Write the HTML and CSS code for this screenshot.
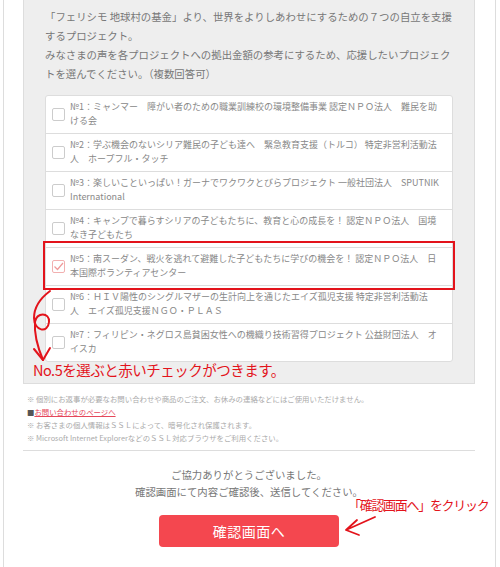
FILE: index.html
```html
<!DOCTYPE html>
<html lang="ja">
<head>
    <meta charset="UTF-8">
    <meta name="viewport" content="width=device-width, initial-scale=1.0">
    <title>アンケート</title>
    <link rel="stylesheet" href="styles.css">
</head>
<body>
<div class="page">

    <!-- Question panel -->
    <div class="panel">
        <p class="lead">「フェリシモ 地球村の基金」より、世界をよりしあわせにするための７つの自立を支援するプロジェクト。<br>みなさまの声を各プロジェクトへの拠出金額の参考にするため、応援したいプロジェクトを選んでください。（複数回答可）</p>

        <ul class="choices">
            <li class="choice"><span class="box"></span><span class="label">№1：ミャンマー　障がい者のための職業訓練校の環境整備事業 認定ＮＰＯ法人　難民を助<br>ける会</span></li>
            <li class="choice"><span class="box"></span><span class="label">№2：学ぶ機会のないシリア難民の子ども達へ　緊急教育支援（トルコ） 特定非営利活動法<br>人　ホープフル・タッチ</span></li>
            <li class="choice"><span class="box"></span><span class="label">№3：楽しいこといっぱい！ガーナでワクワクとびらプロジェクト 一般社団法人　SPUTNIK<br>International</span></li>
            <li class="choice"><span class="box"></span><span class="label">№4：キャンプで暮らすシリアの子どもたちに、教育と心の成長を！ 認定ＮＰＯ法人　国境<br>なき子どもたち</span></li>
            <li class="choice is-checked">
                <span class="box">
                    <svg viewBox="0 0 13 13" width="13" height="13"><path d="M2.5 6.5 L5.5 9.5 L11 3" fill="none" stroke="#ef9a9a" stroke-width="1.2"/></svg>
                </span>
                <span class="label">№5：南スーダン、戦火を逃れて避難した子どもたちに学びの機会を！ 認定ＮＰＯ法人　日<br>本国際ボランティアセンター</span>
            </li>
            <li class="choice"><span class="box"></span><span class="label">№6：ＨＩＶ陽性のシングルマザーの生計向上を通じたエイズ孤児支援 特定非営利活動法<br>人　エイズ孤児支援ＮＧＯ・ＰＬＡＳ</span></li>
            <li class="choice"><span class="box"></span><span class="label">№7：フィリピン・ネグロス島貧困女性への機織り技術習得プロジェクト 公益財団法人　オ<br>イスカ</span></li>
        </ul>
    </div>

    <!-- Notes -->
    <ul class="notes">
        <li>※ 個別にお返事が必要なお問い合わせや商品のご注文、お休みの連絡などにはご使用いただけません。</li>
        <li><span class="square">■</span><a href="#" class="notes-link">お問い合わせのページへ</a></li>
        <li>※ お客さまの個人情報はＳＳＬによって、暗号化され保護されます。</li>
        <li>※ Microsoft Internet ExplorerなどのＳＳＬ対応ブラウザをご利用ください。</li>
    </ul>

    <!-- Submit -->
    <div class="finish">
        <p class="thanks">ご協力ありがとうございました。<br>確認画面にて内容ご確認後、送信してください。</p>
        <button class="submit" type="button">確認画面へ</button>
    </div>

    <!-- Red annotations drawn over the form -->
    <div class="anno-box"></div>
    <svg class="anno-lines" viewBox="0 0 500 567" width="500" height="567">
        <path d="M50 291 C42 297 34 306 34 318 C34 331 48 334 49 322 C50 312 36 312 35 322 C34 334 38 348 43 360" fill="none" stroke="#e3131b" stroke-width="2" stroke-linecap="round"/>
        <path d="M34 349 L43 360 L50 348" fill="none" stroke="#e3131b" stroke-width="2" stroke-linecap="round" stroke-linejoin="round"/>
        <path d="M375 517 L346 530 M357 520 L346 530 L359 535" fill="none" stroke="#e3131b" stroke-width="1.8" stroke-linecap="round" stroke-linejoin="round"/>
    </svg>
    <p class="anno-text anno-check">No.5を選ぶと赤いチェックがつきます。</p>
    <p class="anno-text anno-click">「確認画面へ」をクリック</p>

</div>
</body>
</html>
```

FILE: styles.css
```css
:root {
    --text: #777;
    --label: #888;
    --line: #ddd;
    --panel: #eee;
    --button: #f4474f;
    --anno: #e3131b;
}

body {
    margin: 0;
    font-family: "Noto Sans CJK JP", "Noto Sans", sans-serif;
    background: #fff;
    color: var(--text);
}

.page {
    position: relative;
    margin: 0 4px 0 3px;
    min-height: 567px;
    border-left: 1px solid var(--line);
    border-right: 1px solid var(--line);
    box-sizing: border-box;
}

/* Question panel */
.panel {
    margin: 0 20px 0 19px;
    padding: 7px 21px 21px;
    background: var(--panel);
    border: 1px solid var(--line);
    border-top: 0;
}

.lead {
    margin: 0 0 12px;
    font-size: 10.4px;
    line-height: 19px;
}

.choices {
    list-style: none;
    margin: 0;
    padding: 0;
    background: #fff;
    border: 1px solid var(--line);
    border-radius: 3px;
}

.choice {
    display: flex;
    align-items: center;
    gap: 5px;
    padding: 4px 7px 5px 6px;
    border-bottom: 1px solid var(--line);
}

.choice:last-child {
    border-bottom: 0;
}

.box {
    flex: none;
    width: 13px;
    height: 13px;
    border: 1px solid #ccc;
    border-radius: 2px;
    background: #fff;
    box-sizing: border-box;
    position: relative;
}

.box svg {
    position: absolute;
    top: -1px;
    left: -1px;
}

.is-checked .box {
    border-color: #f2b0b0;
}

.label {
    font-size: 9px;
    line-height: 14px;
    white-space: nowrap;
    color: var(--label);
}

/* Notes */
.notes {
    list-style: none;
    margin: 8px 0 0 23px;
    padding: 0;
    font-size: 7.4px;
    line-height: 13px;
    color: #aaa;
}

.square {
    color: #555;
}

.notes-link {
    color: #e5475a;
}

/* Submit */
.finish {
    margin: 6px 20px 0 19px;
    padding-top: 15px;
    border-top: 1px solid var(--line);
    text-align: center;
}

.thanks {
    margin: 0 0 15px;
    font-size: 10.4px;
    line-height: 17px;
}

.submit {
    width: 180px;
    height: 32px;
    border: 0;
    border-radius: 4px;
    background: var(--button);
    color: #fff;
    font-family: inherit;
    font-size: 14px;
    letter-spacing: 0.5px;
}

/* Annotations */
.anno-box {
    position: absolute;
    left: 39px;
    top: 241px;
    width: 412px;
    height: 49px;
    border: 2px solid var(--anno);
    box-sizing: border-box;
}

.anno-lines {
    position: absolute;
    left: -4px;
    top: 0;
    pointer-events: none;
}

.anno-text {
    position: absolute;
    margin: 0;
    color: var(--anno);
    white-space: nowrap;
}

.anno-check {
    left: 29px;
    top: 361px;
    font-size: 14.5px;
    line-height: 18px;
    letter-spacing: -0.5px;
}

.anno-click {
    left: 344px;
    top: 497px;
    font-size: 13px;
    line-height: 16px;
    letter-spacing: -1.3px;
}
```
